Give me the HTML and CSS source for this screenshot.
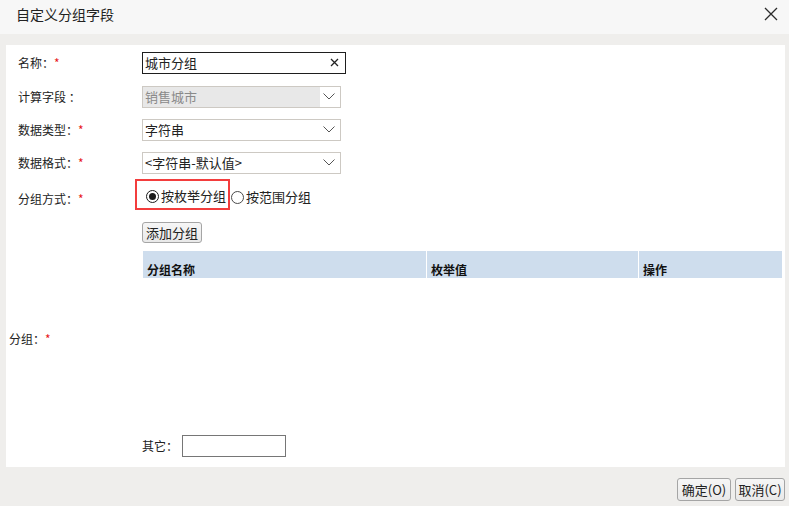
FILE: index.html
```html
<!DOCTYPE html>
<html lang="zh-CN">
<head>
<meta charset="utf-8">
<title>自定义分组字段</title>
<link rel="stylesheet" href="styles.css">
</head>
<body>
<div class="dialog">
  <header class="titlebar">
    <span class="title">自定义分组字段</span>
    <svg class="close" width="14" height="14" viewBox="0 0 14 14"><path d="M1 1 L13 13 M13 1 L1 13" stroke="#2b2b2b" stroke-width="1.3" fill="none"/></svg>
  </header>
  <div class="content">
    <div class="panel">
      <div class="row r1">
        <div class="label">名称<span class="colon">：</span><em>*</em></div>
        <div class="field">
          <div class="textbox name"><span>城市分组</span>
            <svg class="clear" width="9" height="9" viewBox="0 0 9 9"><path d="M1 1 L8 8 M8 1 L1 8" stroke="#222" stroke-width="1.3" fill="none"/></svg>
          </div>
        </div>
      </div>
      <div class="row r2">
        <div class="label">计算字段 <span class="colon">：</span></div>
        <div class="field">
          <div class="select disabled"><span class="val">销售城市</span>
            <span class="arrow"><svg width="12" height="7" viewBox="0 0 12 7"><path d="M0.5 0.5 L6 6 L11.5 0.5" stroke="#555" stroke-width="1" fill="none"/></svg></span>
          </div>
        </div>
      </div>
      <div class="row r3">
        <div class="label">数据类型<span class="colon">：</span><em>*</em></div>
        <div class="field">
          <div class="select"><span class="val">字符串</span>
            <span class="arrow"><svg width="12" height="7" viewBox="0 0 12 7"><path d="M0.5 0.5 L6 6 L11.5 0.5" stroke="#555" stroke-width="1" fill="none"/></svg></span>
          </div>
        </div>
      </div>
      <div class="row r4">
        <div class="label">数据格式<span class="colon">：</span><em>*</em></div>
        <div class="field">
          <div class="select"><span class="val">&lt;字符串-默认值&gt;</span>
            <span class="arrow"><svg width="12" height="7" viewBox="0 0 12 7"><path d="M0.5 0.5 L6 6 L11.5 0.5" stroke="#555" stroke-width="1" fill="none"/></svg></span>
          </div>
        </div>
      </div>
      <div class="row r5">
        <div class="label">分组方式<span class="colon">：</span><em>*</em></div>
        <div class="field radios">
          <div class="highlight">
            <span class="radio checked"></span><span class="rtext">按枚举分组</span>
          </div>
          <div class="ropt">
            <span class="radio"></span><span class="rtext">按范围分组</span>
          </div>
        </div>
      </div>
      <div class="row r6">
        <div class="label"></div>
        <div class="field"><button class="btn add">添加分组</button></div>
      </div>
      <div class="row r7">
        <div class="label group">分组<span class="colon">：</span><em>*</em></div>
        <div class="field tablewrap">
          <div class="thead">
            <div class="th c1">分组名称</div>
            <div class="th c2">枚举值</div>
            <div class="th c3">操作</div>
          </div>
        </div>
      </div>
      <div class="row r8">
        <div class="label"></div>
        <div class="field other">
          <span class="otherlabel">其它<span class="colon">：</span></span>
          <span class="textbox small"></span>
        </div>
      </div>
    </div>
  </div>
  <footer class="footer">
    <button class="btn foot ok">确定(O)</button>
    <button class="btn foot cancel">取消(C)</button>
  </footer>
</div>
</body>
</html>
```
FILE: styles.css
```css
* { box-sizing: border-box; }
html, body {
  margin: 0;
  padding: 0;
  width: 789px;
  height: 506px;
  overflow: hidden;
  background: #efeeec;
  font-family: "Noto Sans CJK SC", "Noto Sans", sans-serif;
  font-size: 12px;
  color: #222;
}
.dialog {
  display: flex;
  flex-direction: column;
  height: 506px;
}
.titlebar {
  height: 34px;
  background: #f7f7f7;
  display: flex;
  align-items: flex-start;
  justify-content: space-between;
  padding: 5px 11px 0 16px;
}
.title {
  font-size: 14px;
  line-height: 18px;
  color: #222;
}
.close { margin-top: 2px; }
.content {
  padding: 11px 4px 0 6px;
}
.panel {
  background: #fff;
  height: 422px;
  display: flex;
  flex-direction: column;
}
.row {
  display: flex;
  align-items: center;
}
.label {
  width: 136px;
  flex: none;
  padding-left: 12px;
  line-height: 16px;
  white-space: nowrap;
}
.colon {
  font-family: "Noto Sans CJK TC", "Noto Sans CJK SC", sans-serif;
}
.label em {
  font-style: normal;
  color: #e8191c;
}
.field { flex: 1; display: flex; align-items: center; }
.r1 { height: 35px; }
.r2, .r3 { height: 33px; }
.r4 { height: 33px; }
.r5 { height: 36px; align-items: flex-start; }
.r5 .label { margin-top: 12px; }
.r6 { height: 33px; align-items: flex-start; }
.r6 .field { padding-top: 7px; }
.r7 { height: 182px; align-items: center; }
.r7 .label.group { padding-left: 3px; }
.r8 { height: 32px; }

.textbox {
  height: 22px;
  border: 1px solid #767676;
  background: #fff;
  font-size: 13px;
  line-height: 20px;
}
.textbox.name {
  width: 204px;
  border-color: #1e1e1e;
  display: flex;
  align-items: center;
  justify-content: space-between;
  padding: 0 6px 0 2px;
}
.select {
  width: 199px;
  height: 22px;
  border: 1px solid #cdc9c3;
  display: flex;
  align-items: stretch;
  font-size: 13px;
  line-height: 20px;
  background: #fff;
}
.select .val { flex: 1; padding-left: 2px; }
.select .arrow {
  width: 20px;
  display: flex;
  align-items: center;
  justify-content: center;
  padding-right: 3px;
  background: #fff;
}
.select.disabled .val { background: #e8e8e8; color: #8a8a8a; }

.radios { align-items: flex-start; margin-left: -7px; }
.highlight {
  height: 31px;
  width: 95px;
  border: 2px solid #f33d3d;
  display: flex;
  align-items: flex-end;
  padding: 0 0 2px 9px;
}
.ropt {
  display: flex;
  align-items: flex-end;
  height: 31px;
  padding-bottom: 4px;
}
.radio {
  width: 13px;
  height: 13px;
  border-radius: 50%;
  border: 1px solid #4a4a4a;
  background: #fff;
  display: inline-flex;
  align-items: center;
  justify-content: center;
  margin-bottom: 3px;
  flex: none;
}
.radio.checked { border-color: #1a1a1a; }
.radio.checked::after {
  content: "";
  width: 7px;
  height: 7px;
  border-radius: 50%;
  background: #1a1a1a;
}
.rtext {
  font-size: 13px;
  line-height: 18px;
  margin-left: 2px;
}
.ropt .radio { margin-left: 1px; margin-bottom: 2px; }
.highlight .rtext { margin-bottom: 1px; }

.btn {
  font-family: "Noto Sans CJK SC", "Noto Sans", sans-serif;
  font-size: 13px;
  color: #222;
  background: linear-gradient(#f6f6f6, #e9e9e9);
  border: 1px solid #a5a5a5;
  border-radius: 3px;
  padding: 0;
  line-height: 19px;
  height: 21px;
}
.btn.add { width: 60px; }

.tablewrap {
  align-self: flex-start;
  padding: 3px 3px 0 0;
}
.thead {
  display: flex;
  gap: 1px;
  padding: 0 0 0 1px;
  width: 640px;
}
.th {
  background: #cedded;
  height: 27px;
  font-weight: 700;
  font-size: 12px;
  line-height: 16px;
  padding: 11px 0 0 4px;
  color: #111;
}
.c1 { width: 283px; }
.c2 { width: 211px; }
.c3 { width: 143px; }

.other { gap: 0; }
.otherlabel { width: 40px; line-height: 16px; }
.textbox.small { width: 104px; height: 22px; }

.footer {
  flex: 1;
  display: flex;
  justify-content: flex-end;
  align-items: flex-start;
  gap: 4px;
  padding: 11px 4px 0 0;
}
.btn.foot { height: 23px; line-height: 21px; }
.btn.ok { width: 54px; }
.btn.cancel { width: 50px; }
```
